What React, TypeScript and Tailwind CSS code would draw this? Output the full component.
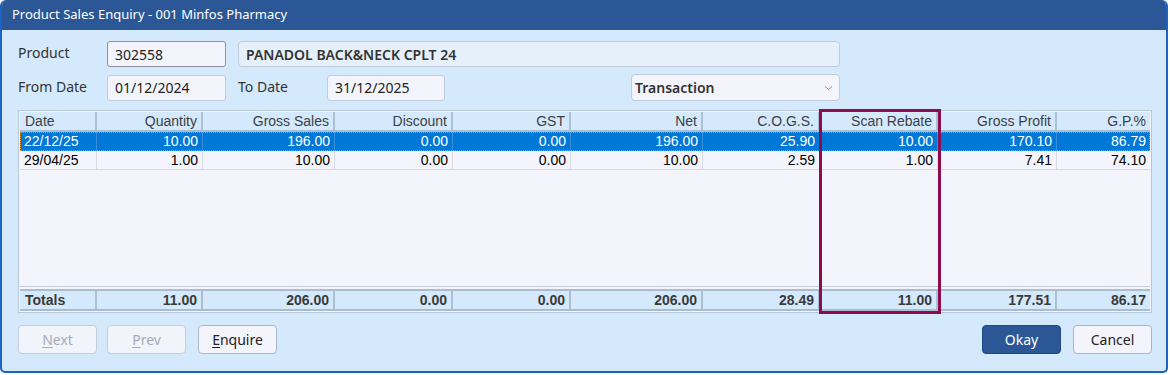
import React from "react";

const cols = [
  { name: "Date", w: "w-[77px]", left: true },
  { name: "Quantity", w: "w-[106px]" },
  { name: "Gross Sales", w: "w-[132px]" },
  { name: "Discount", w: "w-[118px]" },
  { name: "GST", w: "w-[118px]" },
  { name: "Net", w: "w-[132px]" },
  { name: "C.O.G.S.", w: "w-[117px]" },
  { name: "Scan Rebate", w: "w-[118px]" },
  { name: "Gross Profit", w: "w-[119px]" },
  { name: "G.P.%", w: "w-[93px]" },
];

const rows = [
  ["22/12/25", "10.00", "196.00", "0.00", "0.00", "196.00", "25.90", "10.00", "170.10", "86.79"],
  ["29/04/25", "1.00", "10.00", "0.00", "0.00", "10.00", "2.59", "1.00", "7.41", "74.10"],
];

const totals = ["Totals", "11.00", "206.00", "0.00", "0.00", "206.00", "28.49", "11.00", "177.51", "86.17"];

const ui = "font-['Noto_Sans',sans-serif]";
const grid = "font-['Liberation_Sans',Arial,sans-serif] text-[14px]";

function Btn({ label, u, disabled, primary, w = "w-[79px]" }: { label: string; u?: boolean; disabled?: boolean; primary?: boolean; w?: string }) {
  const cls = primary
    ? "bg-[#2b5797] border-[#1f4a86] text-white"
    : disabled
    ? "bg-[#f2f4fc] border-[#c3cddb] text-[#a3abb8]"
    : "bg-[#f3f4fc] border-[#a8b6c8] text-[#222]";
  return (
    <button className={`${w} h-[29px] rounded-[4px] border text-[14px] ${ui} flex items-center justify-center ${cls}`}>
      {u ? (
        <span>
          <span className="underline underline-offset-2">{label[0]}</span>
          {label.slice(1)}
        </span>
      ) : (
        label
      )}
    </button>
  );
}

export default function App() {
  return (
    <div className="w-[1170px] h-[375px] bg-white">
      <div className="relative w-[1168px] h-[373px] rounded-t-[6px] rounded-b-[5px] border-2 border-t-0 border-[#1c62c4] bg-[#d5e9fc] overflow-hidden">
        <div className={`h-[30px] bg-[#2b5797] text-white text-[13px] pl-[10px] flex items-center ${ui}`}>
          Product Sales Enquiry - 001 Minfos Pharmacy
        </div>

        <div className="pl-[16px] pt-[11px]">
          <div className="flex items-center">
            <div className={`w-[89px] text-[14px] text-[#333] -mt-[3px] ${ui}`}>Product</div>
            <div className={`w-[119px] h-[26px] rounded-[3px] border border-[#8c929c] bg-[#f4f5fc] pl-[7px] flex items-center text-[14px] text-[#222] ${ui}`}>302558</div>
            <div className={`ml-[12px] w-[602px] h-[26px] rounded-[4px] border border-[#c2cbd8] bg-[#e6f0fa] pl-[7px] flex items-center text-[14px] font-semibold text-[#333] ${ui}`}>
              PANADOL BACK&amp;NECK CPLT 24
            </div>
          </div>
          <div className="flex items-center mt-[7px]">
            <div className={`w-[89px] text-[14px] text-[#333] -mt-[3px] ${ui}`}>From Date</div>
            <div className={`w-[119px] h-[26px] rounded-[3px] border border-[#c2cbd8] bg-[#f4f5fc] pl-[7px] flex items-center text-[14px] text-[#222] ${ui}`}>01/12/2024</div>
            <div className={`ml-[12px] w-[89px] text-[14px] text-[#333] -mt-[3px] ${ui}`}>To Date</div>
            <div className={`w-[118px] h-[26px] rounded-[3px] border border-[#c2cbd8] bg-[#f4f5fc] pl-[7px] flex items-center text-[14px] text-[#222] ${ui}`}>31/12/2025</div>
            <div className={`ml-[186px] w-[209px] h-[27px] rounded-[4px] border border-[#c2cbd8] bg-[#f4f5fc] pl-[3px] pr-[6px] flex items-center justify-between text-[14px] font-semibold text-[#333] ${ui}`}>
              <span>Transaction</span>
              <svg width="9" height="6" viewBox="0 0 9 6" className="mt-[1px]">
                <path d="M1 1.5 L4.5 4.5 L8 1.5" fill="none" stroke="#8a9099" strokeWidth="1" />
              </svg>
            </div>
          </div>

          <div className={`relative mt-[9px] w-[1134px] border border-[#b9c6d6] p-[1px] bg-[#f3f4fc] ${grid}`}>
            <div className="flex h-[20px] bg-[#d5e9fc] border-b-2 border-[#a9bcd0] text-[#3a3f47]">
              {cols.map((c, i) => (
                <div
                  key={c.name}
                  className={`${c.w} flex items-center ${c.left ? "justify-start pl-[5px]" : "justify-end pr-[4px]"} ${i < cols.length - 1 ? "border-r-2 border-[#aebfd2]" : ""}`}
                >
                  {c.name}
                </div>
              ))}
            </div>
            {rows.map((r, ri) => (
              <div
                key={ri}
                className={`flex h-[19px] ${ri === 0 ? "bg-[#0078d7] text-white outline outline-1 outline-dotted outline-[#d8902c] -outline-offset-1" : "text-black border-b border-[#d6dae3]"}`}
              >
                {r.map((v, i) => (
                  <div
                    key={i}
                    className={`${cols[i].w} flex items-center ${i === 0 ? "justify-start pl-[4px]" : "justify-end pr-[4px]"} ${i < cols.length - 1 ? (ri === 0 ? "border-r border-[#3b8fd9]" : "border-r border-[#d6dae3]") : ""}`}
                  >
                    {v}
                  </div>
                ))}
              </div>
            ))}
            <div className="h-[116px]" />
            <div className="border-t border-[#c3ccd8] h-[3px]" />
            <div className="flex h-[22px] bg-[#d5e9fc] border-y-2 border-[#a9bcd0] font-bold text-[#3a3a3a]">
              {totals.map((v, i) => (
                <div
                  key={i}
                  className={`${cols[i].w} flex items-center ${i === 0 ? "justify-start pl-[5px]" : "justify-end pr-[4px]"} ${i < cols.length - 1 ? "border-r-2 border-[#aebfd2]" : ""}`}
                >
                  {v}
                </div>
              ))}
            </div>
            <div className="absolute left-[800px] top-[-2px] w-[122px] h-[205px] border-[3px] border-[#8c0c4e] pointer-events-none" />
          </div>

          <div className="flex items-center mt-[12px] pr-[14px]">
            <Btn label="Next" u disabled />
            <div className="ml-[10px]">
              <Btn label="Prev" u disabled />
            </div>
            <div className="ml-[12px]">
              <Btn label="Enquire" u />
            </div>
            <div className="flex-1" />
            <Btn label="Okay" primary />
            <div className="ml-[12px]">
              <Btn label="Cancel" />
            </div>
          </div>
        </div>
      </div>
    </div>
  );
}
